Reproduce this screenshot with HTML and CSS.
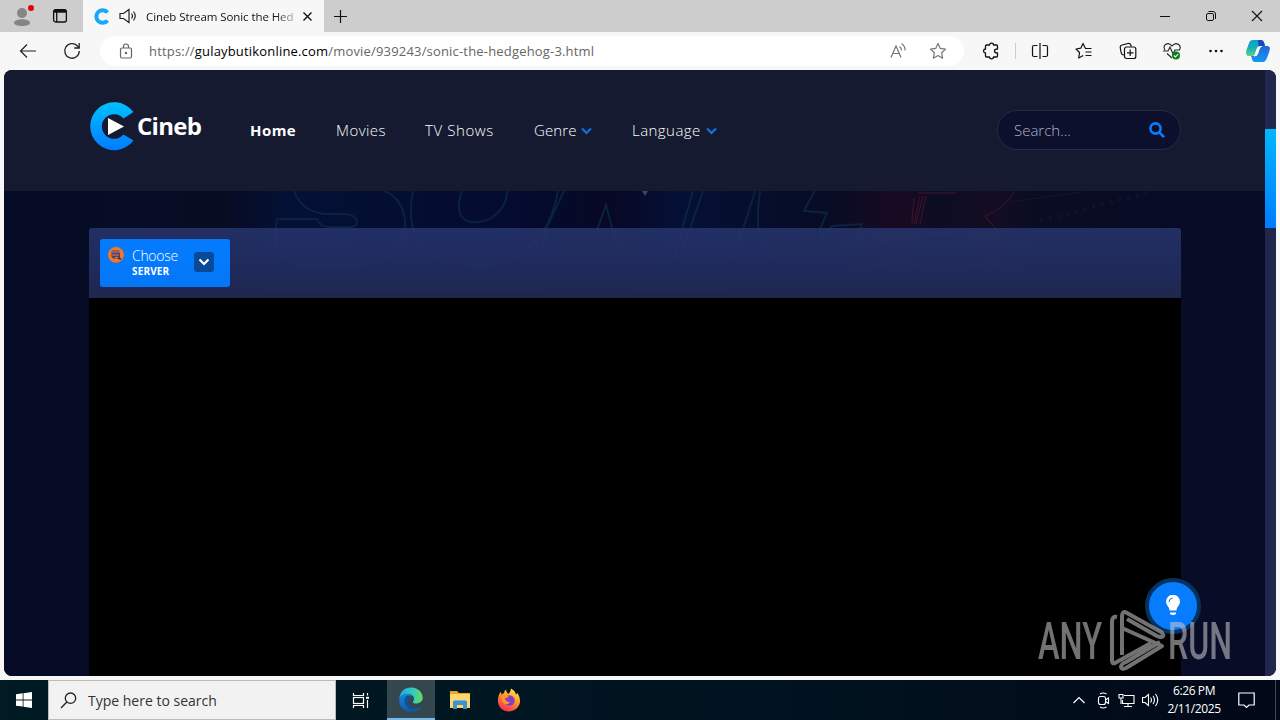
FILE: index.html
```html
<!DOCTYPE html>
<html lang="en">
<head>
  <meta charset="utf-8">
  <title>Cineb Stream Sonic the Hedgehog 3</title>
  <link rel="stylesheet" href="styles.css">
</head>
<body>

  <!-- tabs -->
  <div class="tab-strip">
    <div class="profile">
      <svg width="24" height="24" viewBox="0 0 24 24"><circle cx="12" cy="9" r="5" fill="#858585"/><path d="M4 19c0-5 16-5 16 0 0 4-16 4-16 0z" fill="#858585"/><circle cx="21" cy="4" r="3" fill="#e3000b"/></svg>
    </div>
    <div class="tab-actions">
      <svg width="16" height="16" viewBox="0 0 16 16" fill="none" stroke="#111" stroke-width="1.300"><rect x="1.600" y="1.600" width="12.800" height="12.400" rx="2"/><path d="M2 3.200h12" stroke-width="3"/><path d="M4.700 4v10"/></svg>
    </div>
    <div class="tab">
      <svg class="favicon" width="17" height="17" viewBox="0 0 17 17"><path d="M14.500 4.500A6.300 6.300 0 1 0 14.500 12.500" fill="none" stroke="#17a8fb" stroke-width="4"/></svg>
      <svg class="sound" width="18" height="16" viewBox="0 0 18 16" fill="none" stroke="#222" stroke-width="1.2"><path d="M1 5.500h3.500L10 1.500v13l-5.500-4H1zM12.500 5.500q2 2.500 0 5M14.500 3.500q3.500 4.500 0 9"/></svg>
      <span class="tab-title">Cineb Stream Sonic the Hed</span>
      <svg class="tab-close" width="9" height="9" viewBox="0 0 9 9" stroke="#111" stroke-width="1.4"><path d="M.5.5l8 8M8.500.5l-8 8"/></svg>
    </div>
    <svg class="new-tab" width="15" height="15" viewBox="0 0 15 15" stroke="#111" stroke-width="1.2"><path d="M7.500 1v13M1 7.500h13"/></svg>
    <div class="window-buttons">
      <svg width="46" height="32" viewBox="0 0 46 32" stroke="#111"><path d="M18 16.500h10"/></svg>
      <svg width="46" height="32" viewBox="0 0 46 32" fill="none" stroke="#111"><rect x="18.500" y="13.500" width="7" height="7" rx="1.500"/><path d="M20.500 11.500h4.500q2.500 0 2.500 2.500v5"/></svg>
      <svg width="46" height="32" viewBox="0 0 46 32" stroke="#111" stroke-width="1.1"><path d="M18 11l10 10M28 11l-10 10"/></svg>
    </div>
  </div>

  <!-- toolbar -->
  <div class="toolbar">
    <div class="tool"><svg width="18" height="16" viewBox="0 0 18 16" fill="none" stroke="#222" stroke-width="1.200"><path d="M17 8H1.500M8 1.500L1.500 8 8 14.500"/></svg></div>
    <div class="tool"><svg width="18" height="18" viewBox="0 0 18 18" fill="none" stroke="#222" stroke-width="1.300"><path d="M16.300 9A7.300 7.300 0 1 1 14.200 3.800L16 5.600M16.200 1v5h-5"/></svg></div>
    <div class="address">
      <svg class="lock" width="14" height="17" viewBox="0 0 14 17" fill="none" stroke="#666" stroke-width="1.200"><rect x="1.500" y="5" width="11" height="10" rx="1.500"/><path d="M4.500 5V3.500a2.500 2.500 0 0 1 5 0V5"/><circle cx="7" cy="10" r=".6" fill="#666"/></svg>
      <span class="url">https://<b>gulaybutikonline.com</b>/movie/939243/sonic-the-hedgehog-3.html</span>
      <svg class="read" width="18" height="18" viewBox="0 0 18 18" fill="none" stroke="#777" stroke-width="1.200"><path d="M2 15.500L7 4l5 11.500M3.700 11.500h6.600M10.500 4.500q2 1.500 2 4M12.500 1.500q4 3 3.500 7"/></svg>
      <svg class="star" width="18" height="18" viewBox="0 0 18 18" fill="none" stroke="#777" stroke-width="1.200" stroke-linejoin="round"><path d="M9 1.500l2.300 4.900 5.200.7-3.800 3.700.9 5.400L9 13.600l-4.600 2.600.9-5.400L1.500 7.100l5.200-.7z"/></svg>
    </div>
    <div class="tool puzzle"><svg width="18" height="18" viewBox="0 0 18 18" fill="none" stroke="#111" stroke-width="1.300" stroke-linejoin="round"><path d="M4.500 3H7.500q0-1.800 2-1.800t2 1.800h3q1 0 1 1v3q-3 0-3 2t3 2v3q0 1-1 1h-3q0 1.800-2 1.800t-2-1.800h-3q-1 0-1-1v-3q-2-.3-2-2t2-2V4q0-1 1-1z"/></svg></div>
    <div class="divider"></div>
    <div class="tool"><svg width="18" height="18" viewBox="0 0 18 18" fill="none" stroke="#111" stroke-width="1.200"><path d="M6.500 3.500H3Q1.500 3.500 1.500 5v8q0 1.500 1.500 1.500h3.500M11.500 3.500H15q1.500 0 1.500 1.500v8q0 1.500-1.500 1.500h-3.500M9 1v16"/></svg></div>
    <div class="tool"><svg width="18" height="18" viewBox="0 0 18 18" fill="none" stroke="#111" stroke-width="1.200" stroke-linejoin="round"><path d="M16.500 6.500h-6L8 1.500 5.800 6.200 1 7l3.500 3.500L3.700 16l4.500-2.500M10.500 10h6M10.500 13.500h6"/></svg></div>
    <div class="tool"><svg width="18" height="18" viewBox="0 0 18 18" fill="none" stroke="#111" stroke-width="1.200"><path d="M5 13Q2.500 13 2 10L1.200 5.500Q1 3.500 3 3l6-1.500q2-.5 2.800 1.500l.5 1.500"/><rect x="5.500" y="5" width="11.300" height="11.500" rx="2"/><path d="M11.200 7.500v6.500M8 10.800h6.500"/></svg></div>
    <div class="tool"><svg width="20" height="18" viewBox="0 0 20 18" fill="none" stroke="#222" stroke-width="1.100"><path d="M3 8C0 3 6-1 10 4c4-5 10-1 7.500 4M1 9h5l2-4 3 7 2-4h5M5 11.500l5 4.500"/><circle cx="14" cy="13.500" r="4" fill="#0b7d19" stroke="none"/><path d="M12 13.500l1.500 1.500 2.700-3" stroke="#fff"/></svg></div>
    <div class="tool"><svg width="16" height="4" viewBox="0 0 16 4" fill="#111"><circle cx="2.500" cy="2" r="1.300"/><circle cx="8" cy="2" r="1.300"/><circle cx="13.500" cy="2" r="1.300"/></svg></div>
    <div class="tool copilot"><svg width="26" height="24" viewBox="0 0 26 24">
      <defs>
        <linearGradient id="cpA" x1="0" y1="0" x2="0" y2="1"><stop offset="0" stop-color="#0a9fd5"/><stop offset=".5" stop-color="#19aebb"/><stop offset="1" stop-color="#5bd382"/></linearGradient>
        <linearGradient id="cpB" x1="0" y1="0" x2="0" y2="1"><stop offset="0" stop-color="#2467d8"/><stop offset="1" stop-color="#1498f5"/></linearGradient>
      </defs>
      <path d="M8 1h8q2.500 0 3.500 4l.5 2h-4q-2 0-3 3l-1.500 4Q10.500 17 8 17H4Q0 17 1.500 11L4 4Q5 1 8 1z" fill="url(#cpA)"/>
      <path d="M13 1h3q2.500 0 3.500 4l.5 2h-4q-1.500 0-2.500 2z" fill="#164bb5"/>
      <path d="M18 7h4q4 0 2.500 5l-2.500 7q-1.500 4-4 4h-8q-2.500 0-3-3l-1-3h3q2.500 0 3.500-3l2-5q1-2 3.500-2z" fill="url(#cpB)"/>
      <path d="M11.500 10q1-3 4-3h2q-2 .5-3 3.500L13.200 14.500q-1.200 3.500-5 2.500 1.500-.5 2-3z" fill="#fff"/>
    </svg></div>
  </div>

  <!-- web page -->
  <div class="viewport">
    <div class="page">
      <header class="header">
        <a class="logo">
          <svg width="45" height="49" viewBox="0 0 45 49">
            <defs><linearGradient id="logoFill" x1="0" y1="0" x2="0" y2="1"><stop offset="0" stop-color="#00c0ff"/><stop offset="1" stop-color="#007bff"/></linearGradient></defs>
            <path d="M43.500 10L33.500 16.500A12.300 12.300 0 1 0 33.500 32.500L43.500 38.500A24 24 0 1 1 43.500 10z" fill="url(#logoFill)"/>
            <path d="M18 16l16 8.500L18 33z" fill="#fff"/>
          </svg>
          <span>Cineb</span>
        </a>
        <nav class="menu">
          <a class="home">Home</a>
          <a class="movies">Movies</a>
          <a class="shows">TV Shows</a>
          <a class="genre">Genre</a>
          <svg class="arrow" width="11" height="8" viewBox="0 0 11 8" fill="none" stroke="#0a74e0" stroke-width="2.200"><path d="M1 1.500l4.500 4.500L10 1.500"/></svg>
          <a class="language">Language</a>
          <svg class="arrow" width="11" height="8" viewBox="0 0 11 8" fill="none" stroke="#0a74e0" stroke-width="2.200"><path d="M1 1.500l4.500 4.500L10 1.500"/></svg>
        </nav>
        <div class="search">
          <span>Search...</span>
          <svg width="16" height="16" viewBox="0 0 16 16" fill="none" stroke="#0a7cff" stroke-width="2.600"><circle cx="6.500" cy="6.500" r="5.100"/><path d="M10.300 10.300l4.800 4.900"/></svg>
        </div>
      </header>

      <main class="watch">
        <!-- faded movie backdrop -->
        <svg class="backdrop" width="1261" height="108" viewBox="4 190 1261 108">
          <defs>
            <linearGradient id="glow"><stop offset="0" stop-color="#070c26"/><stop offset=".12" stop-color="#080c22"/><stop offset=".18" stop-color="#041036"/><stop offset=".4" stop-color="#040b2e"/><stop offset=".48" stop-color="#070824"/><stop offset=".54" stop-color="#041036"/><stop offset=".68" stop-color="#070c24"/><stop offset=".75" stop-color="#190a22"/><stop offset=".78" stop-color="#0b0d23"/><stop offset=".83" stop-color="#150c23"/><stop offset=".87" stop-color="#0a0d22"/><stop offset="1" stop-color="#070b24"/></linearGradient>
          </defs>
          <rect x="93" y="190" width="1080" height="108" fill="url(#glow)"/>
          <g fill="none" stroke="#0c2a49" stroke-width="2" opacity=".75">
            <path d="M294 190q7 20 30 23h20c15 0 17 13 6 13h-20q-10 0-13-8h-40q-4 20 2 32 10 15 34 14h40c60 0 65-61 31-74"/>
            <path d="M413 190c-10 50 15 74 66 74 40 0 70-24 79-74M462 190c-12 35 15 35 29 27q16-10 16-27"/>
            <path d="M564 190l-18 38-5 32h45l20-56 15 56M703 190l-24 70M693 190l-20 70"/>
            <path d="M755 190l-22 70M760 190c-6 45-1 72 39 72h51l12-39-30 2-8 14-4-11 7-16-23-2 11-21"/>
          </g>
          <path d="M642 190l3 5 3-5z" fill="#3a4566"/>
          <g fill="none" stroke="#551b32" opacity=".5">
            <path d="M918 192h38M914 197l-2 26m8-28l-6 28m9-28l-7 28m10-28l-6 28M1014 191q-9 16-29 24l11 13q2 35-12 52" stroke-width="1.300"/>
            <path d="M860 248l45-16h48q10 4-8 22"/>
            <path d="M1010 201l72-10" stroke="#20233d"/>
            <path d="M1040 220l110-29" stroke="#171b34" stroke-width="4" stroke-dasharray="3 6"/>
          </g>
        </svg>
        <div class="player">
          <div class="player-bar">
            <div class="server">
              <svg class="server-icon" width="16" height="17" viewBox="0 0 16 17"><circle cx="8" cy="8.800" r="7.900" fill="#f5781f"/><path d="M4 4.500h7l1 2v5l-2 1H5l-1.500-2v-4z" fill="#4a416e"/><path d="M4 6h8M4 9h7M7 11.500h4" stroke="#d8825c"/><path d="M10 11.500l3 2" stroke="#30355f" stroke-width="2"/></svg>
              <div class="server-text">
                <div class="choose">Choose</div>
                <div class="label">SERVER</div>
              </div>
              <div class="server-toggle"><svg width="12" height="8" viewBox="0 0 12 8" fill="none" stroke="#fff" stroke-width="2.200"><path d="M1.500 1.500L6 6l4.500-4.500"/></svg></div>
            </div>
          </div>
          <div class="video"></div>
        </div>
      </main>
    </div>
    <div class="scrollbar"><div class="thumb"></div></div>

    <div class="light-button"><svg width="16" height="22" viewBox="0 0 16 22"><path d="M4.500 15.500Q4.500 13 3 11.500A7 7 0 1 1 13 11.500Q11.500 13 11.500 15.500zM5 17.500h6v1.500q-3 2-6 0z" fill="#fff"/><path d="M4 7q0-3.500 3.500-4" fill="none" stroke="#0a6ddd"/></svg></div>
    <svg class="watermark" width="210" height="72" viewBox="1030 605 210 72">
      <g opacity=".57">
      <g class="mark-text">
        <text x="1038" y="659" textLength="64" lengthAdjust="spacingAndGlyphs">ANY</text>
        <text x="1168" y="659" textLength="64" lengthAdjust="spacingAndGlyphs">RUN</text>
      </g>
      <g fill="none" stroke="#c9c9cd" stroke-width="4" stroke-linejoin="round">
        <path d="M1122 655v-38q0-7 5-4l34 19q3 2 2 4-2 2-6 0l-30-17"/>
        <path d="M1117 617q-5-1-5 5v39q0 3 3 2l36-20M1122 628l40 18-36 22q-4 2-5-1 0-3 5-5l34-20"/>
      </g>
      </g>
    </svg>
  </div>

  <!-- taskbar -->
  <div class="taskbar">
    <div class="start"><svg width="16" height="16" viewBox="0 0 16 16" fill="#fff"><path d="M0 2.300L6.700 1.300V7.500H0zM7.500 1.200L16 0v7.500H7.500zM0 8.400h6.700v6.200L0 13.700zM7.500 8.400H16V16l-8.500-1.200z"/></svg></div>
    <div class="task-search">
      <svg width="17" height="17" viewBox="0 0 17 17" fill="none" stroke="#222" stroke-width="1.300"><circle cx="10.500" cy="6.200" r="5.200"/><path d="M6.800 10L1 16"/></svg>
      <span>Type here to search</span>
    </div>
    <div class="app"><svg width="18" height="17" viewBox="0 0 18 17" fill="none" stroke="#fff" stroke-width="1.200"><path d="M1.500 1v2.500h10V1M1.500 16v-2.500h10V16M15.500 1v2.500M15.500 8v8"/><rect x="1.500" y="5.500" width="10" height="6"/><path d="M14 5.800h3" stroke-width="2"/></svg></div>
    <div class="app active"><svg width="24" height="25" viewBox="0 0 24 25">
      <defs>
        <linearGradient id="edgeTop"><stop offset="0" stop-color="#22a8dc"/><stop offset=".55" stop-color="#31c9cb"/><stop offset="1" stop-color="#69dc55"/></linearGradient>
        <linearGradient id="edgeLow" x1="0" y1="0" x2="0" y2="1"><stop offset="0" stop-color="#1887d8"/><stop offset="1" stop-color="#0d5ab5"/></linearGradient>
      </defs>
      <path d="M.3 12C1 4 6 .5 12 .5c8 0 12 6 11.700 10.500C23.500 17 15 17.500 14 15.500c-.5-1 1.500-2 1-4.500C14 6 4 5 .3 12z" fill="url(#edgeTop)"/>
      <path d="M.3 12C1.500 7 7 6 10.500 7.500 14 9 12 10 9.500 12c-3 3-1 9 5 9.500 3.500.3 6-1.500 7-1.500s0 1 0 1C14 28-1 25 .3 12z" fill="url(#edgeLow)"/>
      <path d="M8 8.500C3 12 6 21 12.500 23.500c3.500 0 7-1.500 9-3.500-8 3-13-1-13-5 0-3 3-4 3.500-5.500Q11 8 8 8.500z" fill="#105298"/>
    </svg></div>
    <div class="app folder"><svg width="22" height="20" viewBox="0 0 22 20"><path d="M1 1h7l2 2h11v15H1z" fill="#e6a52d"/><path d="M1 4h20v14H1z" fill="#ffd768"/><path d="M4 19v-8h14v8h-4v-4H8v4z" fill="#3e93ce"/><path d="M5 10.500h12" stroke="#6db9e8"/></svg></div>
    <div class="app"><svg width="24" height="24" viewBox="0 0 24 24">
      <defs><linearGradient id="foxFill" x1=".8" y1="0" x2=".3" y2="1"><stop offset="0" stop-color="#fff04a"/><stop offset=".45" stop-color="#ff9829"/><stop offset="1" stop-color="#f52858"/></linearGradient></defs>
      <path d="M14 .5q4 2 5 6l1.500-1.500q3 5 2.500 9C22 20 17 23.500 12 23.500 5 23.500.5 18 1 12 1 8 2.500 5 4 3.500l.5 3L7 5Q7 3 9 1.500q0 3 2.500 4.500Q14 3.500 14 .5z" fill="url(#foxFill)"/>
      <circle cx="12.500" cy="12.500" r="5.200" fill="#8340c5"/><path d="M5 8q4-2 7 1-2 1-4 1 0 4 5 4-2 3-5 2Q4 13 5 8z" fill="#ff9725"/>
    </svg></div>
    <div class="tray">
      <svg class="up" width="12" height="8" viewBox="0 0 12 8" fill="none" stroke="#fff" stroke-width="1.200"><path d="M.5 7L6 1.500 11.500 7"/></svg>
      <svg class="cam" width="13" height="17" viewBox="0 0 13 17" fill="none" stroke="#fff" stroke-width="1.100"><rect x="1.500" y="4.500" width="7" height="8" rx="2"/><path d="M8.500 8l3-2v5.500l-3-2M3 2q3-2 6.500 0M3 15q3 2 6.500 0"/></svg>
      <svg class="net" width="17" height="15" viewBox="0 0 17 15" fill="none" stroke="#fff" stroke-width="1.100"><path d="M6 2.500h10v8H4.500V7M10 10.500v3M6 13.500h8M1 1.500h4v3.500H1zM3 5v6"/></svg>
      <svg class="vol" width="17" height="14" viewBox="0 0 17 14" fill="none" stroke="#fff" stroke-width="1.100"><path d="M.5 4.500H3l3.500-3v11L3 9.500H.5zM8.500 4.500q2 2.500 0 5M11 3q3 4 0 8M13.500 1q4.500 6 0 12"/></svg>
      <div class="clock"><div>6:26 PM</div><div class="date">2/11/2025</div></div>
      <svg class="note" width="17" height="17" viewBox="0 0 17 17" fill="none" stroke="#fff" stroke-width="1.200"><path d="M.8 1h15.400v12H11l-2.500 2.500L6 13H.8z"/></svg>
      <div class="show-desktop"></div>
    </div>
  </div>

</body>
</html>
```
FILE: styles.css
```css
* {
  box-sizing: border-box;
}

body {
  margin: 0;
  width: 1280px;
  height: 720px;
  overflow: hidden;
  display: flex;
  flex-direction: column;
  background: #f7f7f7;
  font-family: "Open Sans", "Noto Sans", sans-serif;
}

svg {
  display: block;
  flex-shrink: 0;
}

/* tabs */
.tab-strip {
  height: 32px;
  display: flex;
  align-items: center;
  background: #cdcdcd;
}

.profile {
  width: 48px;
  padding-left: 10px;
}

.tab-actions {
  width: 35px;
  height: 32px;
  padding: 8px 0 0 4px;
}

.tab {
  width: 241px;
  height: 32px;
  display: flex;
  align-items: center;
  padding-left: 10px;
  background: #f7f7f7;
}

.sound {
  margin-left: 9px;
}

.tab-title {
  width: 151px;
  margin-left: 9px;
  white-space: nowrap;
  font-size: 11.5px;
  letter-spacing: -0.08px;
  color: #111;
  -webkit-mask-image: linear-gradient(90deg, #000 85%, rgba(0, 0, 0, 0.2));
  mask-image: linear-gradient(90deg, #000 85%, rgba(0, 0, 0, 0.2));
}

.tab-close {
  margin-left: 6px;
}

.new-tab {
  margin-left: 9px;
}

.window-buttons {
  display: flex;
  margin-left: auto;
}

/* toolbar */
.toolbar {
  height: 38px;
  display: flex;
  align-items: center;
  padding-left: 6px;
  background: #f7f7f7;
}

.tool {
  width: 44px;
  display: flex;
  justify-content: center;
  flex-shrink: 0;
}

.address {
  width: 864px;
  height: 30px;
  margin: 0 5px 0 6px;
  display: flex;
  align-items: center;
  border-radius: 15px;
  background: #fff;
}

.lock {
  margin-left: 19px;
}

.url {
  width: 600px;
  margin-left: 16px;
  white-space: nowrap;
  font-size: 13px;
  letter-spacing: 0.18px;
  color: #666;
}

.url b {
  font-weight: 400;
  color: #000;
}

.read {
  margin-left: 140px;
}

.star {
  margin-left: 22px;
}

.divider {
  width: 1px;
  height: 16px;
  margin: 0 2px;
  background: #ccc;
}

.copilot {
  width: 40px;
}

/* web page */
.viewport {
  position: relative;
  width: 1272px;
  height: 606px;
  margin: 0 4px 4px;
  display: flex;
  overflow: hidden;
  border-radius: 8px;
  background: #070b24;
}

.page {
  width: 1261px;
}

.header {
  height: 121px;
  display: flex;
  padding: 0 84px 0 85px;
  background: #151a30;
}

.logo {
  width: 161px;
  height: 113px;
  display: flex;
  align-items: center;
  padding-left: 1px;
  color: #fff;
  font-size: 24px;
  font-weight: 700;
}

.logo span {
  margin: -3px 0 0 2px;
  letter-spacing: -0.7px;
}

.menu {
  height: 120px;
  display: flex;
  align-items: center;
  color: #fff;
  font-size: 15px;
  font-weight: 300;
  letter-spacing: 0.45px;
  white-space: nowrap;
}

.home {
  width: 86px;
  font-weight: 700;
}

.movies {
  width: 89px;
}

.shows {
  width: 109px;
  letter-spacing: 0.6px;
}

.genre {
  width: 47px;
  letter-spacing: 0.1px;
}

.language {
  width: 74px;
  margin-left: 40px;
}

.arrow {
  margin-top: 2px;
}

.search {
  width: 184px;
  height: 40px;
  margin: 40px 0 0 auto;
  display: flex;
  align-items: center;
  justify-content: space-between;
  padding: 0 15px 0 16px;
  border: 1px solid #262b4c;
  border-radius: 20px;
  background: #0c102c;
  color: #aeb3cc;
  font-size: 15px;
  font-weight: 300;
}

.watch {
  position: relative;
  height: 485px;
  padding: 37px 84px 0 85px;
  background: linear-gradient(90deg, #070c26, #080c26);
}

.backdrop {
  position: absolute;
  left: 0;
  top: 0;
}

.player {
  position: relative;
  width: 1092px;
  overflow: hidden;
  border-radius: 3px 3px 0 0;
}

.player-bar {
  height: 70px;
  padding: 11px;
  background: linear-gradient(rgba(38, 52, 108, 0.88), rgba(33, 44, 94, 0.94) 60%, #1e284c);
}

.server {
  width: 130px;
  height: 48px;
  display: flex;
  padding: 7px 8px;
  border-radius: 3px;
  background: linear-gradient(#047cff, #0477f7);
  color: #fff;
}

.server-text {
  width: 62px;
  margin-left: 8px;
}

.choose {
  height: 19px;
  line-height: 19px;
  font-size: 14px;
  font-weight: 300;
  letter-spacing: -0.3px;
}

.label {
  line-height: 12px;
  font-size: 10px;
  font-weight: 700;
  letter-spacing: 0.15px;
}

.server-toggle {
  width: 20px;
  height: 20px;
  margin-top: 6px;
  display: flex;
  align-items: center;
  justify-content: center;
  border-radius: 3px;
  background: #084a98;
}

.video {
  height: 378px;
  background: #000;
}

.scrollbar {
  width: 11px;
  padding-top: 59px;
  background: #20264c;
}

.thumb {
  height: 99px;
  background: linear-gradient(#00b8ff, #007bff);
}

.light-button {
  position: absolute;
  left: 1141px;
  top: 508px;
  width: 56px;
  height: 56px;
  display: flex;
  align-items: center;
  justify-content: center;
  border: 4px solid #06325f;
  border-radius: 50%;
  background: #087cff;
}

.watermark {
  position: absolute;
  left: 1026px;
  top: 535px;
}

.mark-text {
  font-family: Roboto, sans-serif;
  font-size: 52px;
  font-weight: 500;
  fill: #c9c9cd;
}

/* taskbar */
.taskbar {
  height: 40px;
  display: flex;
  background: linear-gradient(90deg, #001b23, #001320 60%, #020817);
  color: #fff;
}

.start,
.app {
  width: 48px;
  height: 40px;
  display: flex;
  align-items: center;
  justify-content: center;
}

.app {
  width: 49px;
}

.app.active {
  width: 48px;
  margin-left: 2px;
  background: #34474f;
  border-bottom: 2px solid #76b9ed;
}

.task-search {
  width: 288px;
  display: flex;
  align-items: center;
  padding-left: 11px;
  border: 1px solid #bbb;
  background: #f2f2f2;
  color: #333;
  font-size: 14px;
}

.task-search span {
  margin-left: 11px;
}

.tray {
  display: flex;
  align-items: center;
  margin-left: auto;
}

.cam {
  margin-left: 12px;
}

.net {
  margin-left: 8px;
}

.vol {
  margin-left: 7px;
}

.clock {
  width: 70px;
  text-align: center;
  font-size: 12px;
  line-height: 18px;
  letter-spacing: -0.4px;
}

.date {
  letter-spacing: -0.4px;
}

.note {
  margin-left: 9px;
}

.show-desktop {
  width: 5px;
  height: 40px;
  margin-left: 20px;
  border-left: 1px solid #3f4955;
}
```
